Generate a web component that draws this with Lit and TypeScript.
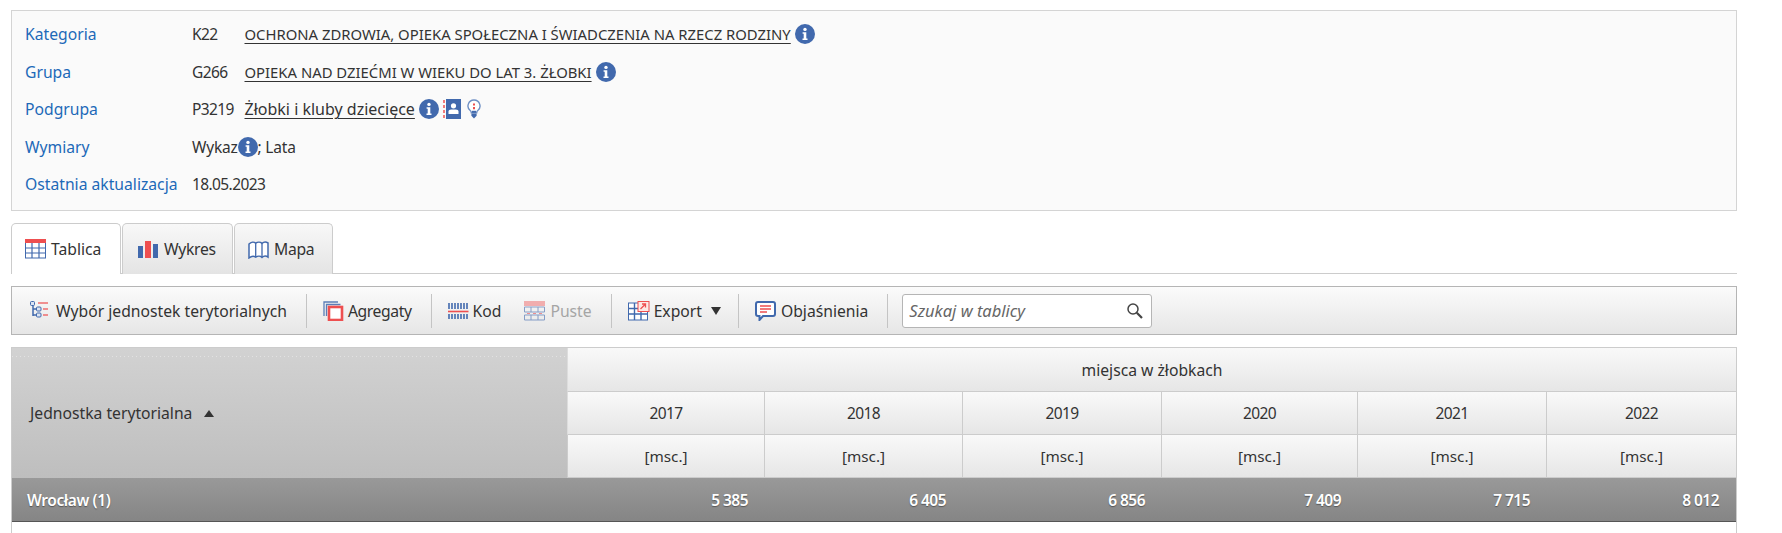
import { LitElement, html, css, svg } from 'lit';
import { customElement } from 'lit/decorators.js';

const BLUE = '#4169ad';
const RED = '#ee4f50';

const infoIcon = html`<svg class="ico" width="20" height="20" viewBox="0 0 20 20">
  <circle cx="10" cy="10" r="10" fill="${BLUE}"></circle>
  <circle cx="10" cy="5.4" r="1.7" fill="#fff"></circle>
  <path d="M7.6 8.2h3.7v6.2h1.2v1.5H7.5v-1.5h1.2V9.7H7.6z" fill="#fff"></path>
</svg>`;

const contactIcon = html`<svg class="ico" width="18" height="20" viewBox="0 0 18 20">
  <rect x="3" y="0" width="15" height="20" fill="${BLUE}"></rect>
  <path d="M0 1h2v3H0zM0 6h2v3H0zM0 11h2v3H0zM0 16h2v3H0z" fill="${RED}" opacity=".75"></path>
  <circle cx="10.5" cy="6.8" r="2.6" fill="#fff"></circle>
  <path d="M5.5 15v-2.4c0-1.4 1.2-2.2 2.6-2.2h4.8c1.4 0 2.6.8 2.6 2.2V15z" fill="#fff"></path>
</svg>`;

const bulbIcon = html`<svg class="ico bulb" width="14" height="20" viewBox="0 0 14 20">
  <path d="M7 1a6 6 0 0 0-3.6 10.8c.6.5.9 1.1.9 1.9h5.4c0-.8.3-1.4.9-1.9A6 6 0 0 0 7 1z" fill="#fff" stroke="#6e8fc4" stroke-width="1.4"></path>
  <path d="M4.4 14.4h5.2v2.4L7 19.6l-2.6-2.8z" fill="${BLUE}"></path>
  <path d="M6 4.6h2v2H6zM6 8h2v2.2H6z" fill="${RED}"></path>
  <path d="M5 11.8h4v2H5z" fill="${BLUE}"></path>
</svg>`;

const tableIcon = svg`<rect x="0.5" y="3" width="20" height="16" fill="#fff" stroke="${BLUE}" stroke-width="1"></rect>
  <rect x="0" y="0" width="21" height="4" fill="${RED}"></rect>
  <path d="M7 4v15M14 4v15M0 9h21M0 14h21" stroke="${BLUE}" stroke-width="1.2"></path>`;

const chartIcon = svg`<rect x="0" y="7" width="5" height="12" fill="${BLUE}"></rect>
  <rect x="7" y="2" width="6" height="17" fill="${RED}"></rect>
  <rect x="15" y="5" width="5" height="14" fill="${BLUE}"></rect>`;

const mapIcon = svg`<path d="M1 5c2-2 5-2.4 6.7-.8C9.5 3 12.5 3 14 4.4c1.6-1.4 4-1.7 6-.4v14c-2-1.3-4.4-1-6 .4-1.5-1.4-4.5-1.4-6.3-.2C6 17 3 17.4 1 19z" fill="#fff" stroke="${BLUE}" stroke-width="1.5"></path>
  <path d="M7.7 4.2V18M14 4.4V18" stroke="${BLUE}" stroke-width="1.3"></path>`;

const treeIcon = svg`<path d="M3 3v12M3 8h6M3 14h6" stroke="${BLUE}" stroke-width="1.5" fill="none"></path>
  <rect x="0.5" y="0.5" width="4" height="4" rx="1" fill="#dbe4f2" stroke="${BLUE}"></rect>
  <rect x="6.5" y="6" width="4.5" height="4" rx="1" fill="#dbe4f2" stroke="${BLUE}"></rect>
  <rect x="6.5" y="12" width="4.5" height="4" rx="1" fill="#dbe4f2" stroke="${BLUE}"></rect>
  <path d="M8 2h10M13 8h5M13 14h5" stroke="${RED}" stroke-width="1.4" opacity=".8"></path>`;

const aggregateIcon = svg`<path d="M1 15V1h14M3.5 15V3.5h14" fill="none" stroke="${BLUE}" stroke-width="1.3" opacity=".85"></path>
  <rect x="6" y="6" width="13" height="13" fill="#fff" stroke="${RED}" stroke-width="2.6"></rect>`;

const codeIcon = svg`<path d="M1 2v6M4 2v6M7 2v6M10 2v6M13 2v6M16 2v6M19 2v6M1 13v5M4 13v5M7 13v5M10 13v5M13 13v5M16 13v5M19 13v5" stroke="${BLUE}" stroke-width="1.6"></path>
  <path d="M0 10.5h20.5" stroke="${RED}" stroke-width="1.6"></path>`;

const emptyIcon = svg`<g opacity=".6"><rect x="0" y="0" width="21" height="5" fill="${RED}" opacity=".7"></rect>
  <path d="M0.5 6h20v5h-20zM0.5 14h20v5h-20zM7 6v5M14 6v5M7 14v5M14 14v5" fill="none" stroke="${BLUE}"></path>
  <path d="M3 12.5h3M9 12.5h3M15 12.5h3" stroke="${RED}"></path></g>`;

const exportIcon = svg`<rect x="0.5" y="2" width="19" height="17" fill="#fff" stroke="${BLUE}"></rect>
  <path d="M0 7.5h20M0 13h20M6.5 2v17M13 2v17" stroke="${BLUE}" stroke-width="1.4"></path>
  <rect x="10" y="0.5" width="11" height="10" fill="#fde9e6" stroke="${RED}"></rect>
  <path d="M12.5 8l5-5M14 3h3.5v3.5" fill="none" stroke="${RED}" stroke-width="1.3"></path>`;

const noteIcon = svg`<path d="M3 1h15a2 2 0 0 1 2 2v10a2 2 0 0 1-2 2H8l-3.5 4v-4H3a2 2 0 0 1-2-2V3a2 2 0 0 1 2-2z" fill="#fff" stroke="${BLUE}" stroke-width="2"></path>
  <path d="M5 5h11M5 8h11M5 11h7" stroke="${RED}" stroke-width="1.5"></path>`;

const searchIcon = html`<svg width="17" height="17" viewBox="0 0 17 17">
  <circle cx="7" cy="7" r="5" fill="none" stroke="#444" stroke-width="1.5"></circle>
  <path d="M10.8 10.8L16 16" stroke="#444" stroke-width="2.2"></path>
</svg>`;

const glyph = (body: unknown) => html`<svg class="ico" width="22" height="20" viewBox="0 0 22 20">${body}</svg>`;

@customElement('app-root')
export class AppRoot extends LitElement {
  static styles = css`
    :host {
      display: block;
      font-family: 'Noto Sans', 'Liberation Sans', sans-serif;
      font-size: 15.7px;
      color: #333;
      box-sizing: border-box;
      padding: 10px 45px 0 11px;
      height: 533px;
      overflow: hidden;
      background: #fff;
    }
    .ico { flex: none; display: block; }
    .bulb { margin-left: 2px; }
    .num { font-size: 15.5px; letter-spacing: -0.6px; }
    .info {
      display: grid;
      grid-template-columns: 167px 1fr;
      grid-auto-rows: 37.5px;
      align-items: center;
      height: 201px;
      box-sizing: border-box;
      padding: 4.5px 14px 0 13px;
      border: 1px solid #d4d4d4;
      background: #fafafa;
    }
    .info .label { color: #1d69b8; }
    .val { display: flex; align-items: center; gap: 4px; }
    .code { width: 48.5px; flex: none; font-size: 15.5px; letter-spacing: -0.6px; }
    .val a { color: #333; text-decoration: underline; text-underline-offset: 3px; }
    .val a.caps { font-size: 14.85px; }
    .val a.sub { font-size: 16px; }
    .dim { font-size: 15.5px; letter-spacing: -0.2px; }
    .tabs {
      display: flex;
      margin-top: 12px;
      height: 51px;
      box-sizing: border-box;
      border-bottom: 1px solid #ccc;
    }
    .tab {
      display: flex;
      align-items: center;
      gap: 4px;
      box-sizing: border-box;
      height: 51px;
      padding-left: 13px;
      margin-right: 1px;
      border: 1px solid #ccc;
      border-bottom: none;
      border-radius: 5px 5px 0 0;
      background: linear-gradient(#f8f8f8, #e4e4e4);
      letter-spacing: -0.3px;
    }
    .tab:nth-child(1) { width: 110px; letter-spacing: 0; }
    .tab:nth-child(2) { width: 111px; padding-left: 15px; }
    .tab:nth-child(3) { width: 99px; }
    .tab.on { background: #fff; }
    .toolbar {
      display: flex;
      align-items: center;
      height: 49px;
      box-sizing: border-box;
      margin-top: 12px;
      padding: 0 18px;
      border: 1px solid #b5b5b5;
      background: linear-gradient(#fbfbfb, #e6e6e6);
    }
    .tool { display: flex; align-items: center; gap: 4px; }
    .tool.tight { letter-spacing: -0.4px; gap: 3px; }
    .tool.close { gap: 3px; }
    .tool.off { color: #a5a5a5; margin-left: 23px; }
    .sep { width: 1px; height: 34px; background: #c4c4c4; margin: 0 16px 0 19px; }
    .arrow {
      width: 0;
      height: 0;
      margin: 0 -2px 0 5px;
      border: 5.5px solid transparent;
      border-top: 8px solid #333;
      border-bottom: none;
    }
    .search {
      display: flex;
      align-items: center;
      justify-content: space-between;
      box-sizing: border-box;
      width: 250px;
      height: 34px;
      margin-left: -2px;
      padding: 0 8px 0 6px;
      border: 1px solid #b5b5b5;
      border-radius: 3px;
      background: #fff;
      color: #666;
      font-style: italic;
      font-size: 16.5px;
    }
    .grid {
      display: grid;
      grid-template-columns: 555px 197px 198px 199px 196px 189px 1fr;
      grid-template-rows: 44px 43px 43px 44px 1fr;
      margin-top: 12px;
      border: 1px solid #ccc;
      border-bottom: none;
      height: 190px;
      box-sizing: border-box;
    }
    .grid > div {
      display: flex;
      align-items: center;
      justify-content: center;
      box-sizing: border-box;
    }
    .head {
      grid-row: span 3;
      justify-content: flex-start !important;
      padding-left: 18px;
      gap: 12px;
      background:
        repeating-linear-gradient(90deg, #e2e2e2 0 1px, transparent 1px 4px) 0 8px / 100% 1px no-repeat,
        linear-gradient(#d2d2d2, #bebebe);
    }
    .up {
      width: 0;
      height: 0;
      border: 5px solid transparent;
      border-bottom: 7px solid #333;
      border-top: none;
    }
    .top { grid-column: span 6; }
    .top, .th {
      background: linear-gradient(#f9f9f9, #e6e6e6);
      border-bottom: 1px solid #ccc;
      border-left: 1px solid #ddd;
    }
    .th + .th { border-left: 1px solid #ccc; }
    .th.unit { font-size: 15.3px; }
    .total {
      background: linear-gradient(#999, #858585);
      border-bottom: 1px solid #555;
      color: #fff;
      font-weight: 600;
      font-size: 15.5px;
      letter-spacing: -0.55px;
      justify-content: flex-end !important;
      padding-right: 16px;
      text-shadow: 0 1px 1px #555;
    }
    .total:nth-last-child(2) { padding-right: 17px; }
    .total.name { justify-content: flex-start !important; padding-left: 15px; letter-spacing: -0.4px; }
    .rest { grid-column: 1 / -1; }
  `;

  render() {
    const years = ['2017', '2018', '2019', '2020', '2021', '2022'];
    const totals = ['5 385', '6 405', '6 856', '7 409', '7 715', '8 012'];
    return html`
      <section class="info">
        <div class="label">Kategoria</div>
        <div class="val"><span class="code">K22</span><a class="caps">OCHRONA ZDROWIA, OPIEKA SPOŁECZNA I ŚWIADCZENIA NA RZECZ RODZINY</a>${infoIcon}</div>
        <div class="label">Grupa</div>
        <div class="val"><span class="code">G266</span><a class="caps">OPIEKA NAD DZIEĆMI W WIEKU DO LAT 3. ŻŁOBKI</a>${infoIcon}</div>
        <div class="label">Podgrupa</div>
        <div class="val"><span class="code">P3219</span><a class="sub">Żłobki i kluby dziecięce</a>${infoIcon}${contactIcon}${bulbIcon}</div>
        <div class="label">Wymiary</div>
        <div class="val dim" style="gap:0"><span>Wykaz</span>${infoIcon}<span>; Lata</span></div>
        <div class="label">Ostatnia aktualizacja</div>
        <div class="val num">18.05.2023</div>
      </section>

      <nav class="tabs">
        <div class="tab on">${glyph(tableIcon)}Tablica</div>
        <div class="tab">${glyph(chartIcon)}Wykres</div>
        <div class="tab">${glyph(mapIcon)}Mapa</div>
      </nav>

      <div class="toolbar">
        <div class="tool">${glyph(treeIcon)}Wybór jednostek terytorialnych</div>
        <span class="sep"></span>
        <div class="tool tight">${glyph(aggregateIcon)}Agregaty</div>
        <span class="sep"></span>
        <div class="tool close">${glyph(codeIcon)}Kod</div>
        <div class="tool off">${glyph(emptyIcon)}Puste</div>
        <span class="sep"></span>
        <div class="tool">${glyph(exportIcon)}Export<span class="arrow"></span></div>
        <span class="sep"></span>
        <div class="tool">${glyph(noteIcon)}Objaśnienia</div>
        <span class="sep"></span>
        <div class="search">Szukaj w tablicy ${searchIcon}</div>
      </div>

      <div class="grid">
        <div class="head">Jednostka terytorialna <span class="up"></span></div>
        <div class="top">miejsca w żłobkach</div>
        ${years.map((y) => html`<div class="th num">${y}</div>`)}
        ${years.map(() => html`<div class="th unit">[msc.]</div>`)}
        <div class="total name">Wrocław (1)</div>
        ${totals.map((t) => html`<div class="total">${t}</div>`)}
        <div class="rest"></div>
      </div>
    `;
  }
}
